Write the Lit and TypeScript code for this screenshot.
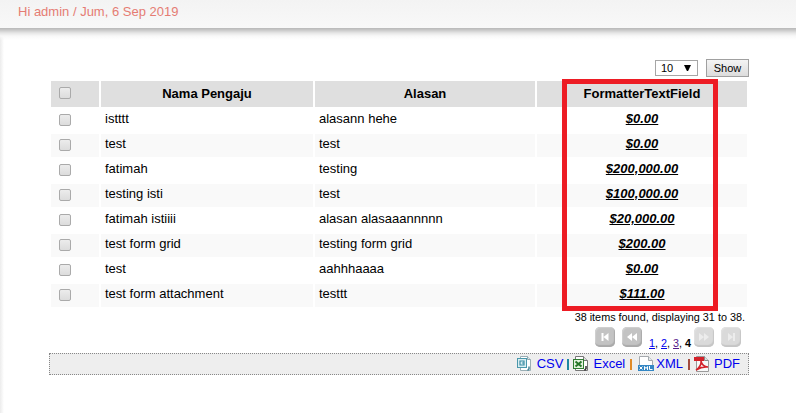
import { LitElement, html, css, svg } from "lit";
import { customElement, property } from "lit/decorators.js";

const rows = [
  ["istttt", "alasann hehe", "$0.00"],
  ["test", "test", "$0.00"],
  ["fatimah", "testing", "$200,000.00"],
  ["testing isti", "test", "$100,000.00"],
  ["fatimah istiiii", "alasan alasaaannnnn", "$20,000.00"],
  ["test form grid", "testing form grid", "$200.00"],
  ["test", "aahhhaaaa", "$0.00"],
  ["test form attachment", "testtt", "$111.00"],
];

const fileIcons: Record<string, unknown> = {
  csv: svg`
    <path d="M3.500 .5h7l3 3v11h-10z" fill="#fff" stroke="#9aaeb4"/>
    <path d="M10.500 .5v3h3" fill="#dce8ec" stroke="#8fa8b0"/>
    <rect x=".5" y="2.500" width="9" height="9" fill="#d9eef2" stroke="#4a97ab"/>
    <path d="M3 5h4v4H3zM5 7h2" fill="none" stroke="#3e8ea4" stroke-width="1.200"/>
    <path d="M12 10.500v2.500l-1.500 1.500" fill="none" stroke="#478599" stroke-width="1.500"/>`,
  excel: svg`
    <path d="M2.500 .5h8l4 4v10h-12z" fill="#fff" stroke="#777"/>
    <path d="M10.500 .5v4h4" fill="#ddd" stroke="#777"/>
    <rect x=".5" y="3.500" width="10" height="9" fill="#e4f3df" stroke="#2f7d31"/>
    <path d="M2.500 5.500l6 5M8.500 5.500l-6 5" stroke="#267528" stroke-width="2"/>
    <path d="M13 10v2.500l-1.500 2" fill="none" stroke="#333" stroke-width="1.500"/>`,
  xml: svg`
    <path d="M1.500 10V.5h9l4 4V10" fill="#fff" stroke="#a5a9ad"/>
    <path d="M10.500 .5v4h4" fill="#e4eaec" stroke="#a5a9ad"/>
    <rect x="0" y="9" width="16" height="6" fill="#3487c4"/>
    <path d="M1.500 10.500l3 3m0-3l-3 3M6.500 14v-3.500l1.500 2 1.500-2V14M11.500 10v3.500h3" fill="none" stroke="#fff"/>`,
  pdf: svg`
    <path d="M2.500 .5h8l4 4v11h-12z" fill="#f8f8f8" stroke="#9a9a9a"/>
    <path d="M10.500 .5v4h4" fill="#ddd" stroke="#8a8a8a"/>
    <path d="M0 1h10v4H0z" fill="#d3222a"/>
    <path d="M2 14c3-2 5.500-5 5-9 1 4 3 6 7 6-4-.5-8 .5-12 3z" fill="none" stroke="#d3222a" stroke-width="1.500"/>`,
};

const glyphs: Record<string, string> = {
  first: "M6.500 6h2v8h-2zM13.500 6v8l-5-4z",
  prev: "M10 6v8l-5-4zM15 6v8l-5-4z",
  next: "M5 6v8l5-4zM10 6v8l5-4z",
  last: "M7 6v8l5-4zM12 6h2v8h-2z",
};

@customElement("page-button")
class PageButton extends LitElement {
  @property() kind = "first";
  @property({ type: Boolean, reflect: true }) disabled = false;
  static styles = css`
    :host { display: block; width: 20px; height: 20px; box-sizing: border-box; border-radius: 5px;
      background: #c3c3c3; box-shadow: inset -1px -2px 1px #aaa, inset 1px 1px 1px #d1d1d1; }
    :host([disabled]) { background: #dadada; box-shadow: inset -1px -2px 1px #c6c6c6, inset 1px 1px 1px #e2e2e2; }
    svg { display: block; }
    path { fill: #fff; }
    :host([disabled]) path { fill: #ececec; }
  `;
  render() {
    return html`<svg width="20" height="20" viewBox="0 0 20 20"><path d=${glyphs[this.kind]}></path></svg>`;
  }
}

@customElement("app-root")
class AppRoot extends LitElement {
  static styles = css`
    :host { display: block; height: 413px; position: relative; overflow: hidden; background: #fff;
      color: #000; font: 12px/16px "Liberation Sans", Arial, sans-serif; }
    .top { height: 28px; box-sizing: border-box; padding: 4px 18px; background: linear-gradient(#f3f3f3, #f8f8f8);
      color: #e57c73; font-size: 13px; }
    .content { height: 385px; box-sizing: border-box; padding: 31px 47px 0 49px;
      background:
        linear-gradient(#b8b8b8, #c8c8c8 2px, #e6e6e6 5px, #f8f8f8 8px, rgba(255, 255, 255, 0) 12px) top / 100% 12px no-repeat,
        linear-gradient(90deg, #ececec, #fff 4px); }
    .controls { display: flex; justify-content: flex-end; align-items: center; gap: 8px; height: 18px; font-size: 11px; }
    .select { display: flex; justify-content: space-between; align-items: center; width: 43px; height: 16px;
      box-sizing: border-box; border: 1px solid #a6a6a6; padding: 0 6px 0 5px; }
    .arrow { width: 7px; height: 6px; background: #000; clip-path: polygon(0 0, 100% 0, 58% 100%, 42% 100%); }
    .show { width: 43px; height: 18px; box-sizing: border-box; border: 1px solid #a0a0a0; padding: 0;
      background: linear-gradient(#f4f4f4, #dcdcdc); font: inherit; line-height: 16px; color: #000; }
    .grid { display: grid; grid-template-columns: 48px 212px 220px 210px; grid-template-rows: 26px repeat(8, 23px);
      gap: 2px; margin: 4px 0 0 2px; width: 696px; }
    .cell { padding: 1px 4px 0; line-height: 17px; font-size: 13px; white-space: nowrap; }
    .odd { background: #f9f9f9; }
    .head { background: #dfdfdf; font-weight: 700; text-align: center; line-height: 23px; }
    .pick { padding: 5px 0 0 8px; }
    .head.pick { padding-top: 6px; }
    .check { display: block; width: 12px; height: 12px; box-sizing: border-box; border: 1px solid #aaa;
      border-radius: 2px; background: linear-gradient(#ececec, #dcdcdc); }
    .money { text-align: center; font-weight: 700; font-style: italic; text-decoration: underline; }
    .mark { position: absolute; left: 562px; top: 79px; width: 156px; height: 232px; box-sizing: border-box;
      border: 5px solid #ed1c24; }
    .summary { margin-top: 3px; width: 696px; text-align: right; font-size: 10.830px; line-height: 14px; }
    .pager { display: flex; justify-content: flex-end; margin: 3px 8px 0 0; height: 20px; font-size: 10.800px; }
    .pager page-button + page-button { margin-left: 7px; }
    .pages { width: 52px; box-sizing: border-box; padding: 8px 0 0 7px; line-height: 16px; white-space: nowrap; }
    a { color: #00e; }
    .seen { color: #551a8b; }
    .export { display: flex; align-items: center; justify-content: flex-end; width: 700px; height: 22px;
      box-sizing: border-box; margin-top: 6px; padding-right: 8px; border: 1px dotted #888; background: #eee; font-size: 13px; }
    .export a { display: flex; align-items: center; gap: 4px; text-decoration: none; height: 20px; }
    .export a.xml { gap: 2px; }
    .export svg { display: block; }
    .label { display: block; line-height: 20px; }
    .bar { width: 2px; height: 11px; margin: 0 4px 0 4px; }
    .teal { background: #1c87a0; }
    .orange { background: #e08a28; margin: 0 6px 0 5px; }
    .brown { background: #a34b3d; margin-left: 5px; }
  `;

  link(kind: string, label: string) {
    return html`<a class=${kind}><svg width="16" height="16" viewBox="0 0 16 16">${fileIcons[kind]}</svg><span class="label">${label}</span></a>`;
  }

  render() {
    return html`
      <div class="top">Hi admin / Jum, 6 Sep 2019</div>
      <div class="content">
        <div class="controls">
          <div class="select"><span>10</span><span class="arrow"></span></div>
          <button class="show">Show</button>
        </div>
        <div class="grid">
          <div class="cell head pick"><span class="check"></span></div>
          <div class="cell head">Nama Pengaju</div>
          <div class="cell head">Alasan</div>
          <div class="cell head">FormatterTextField</div>
          ${rows.map((r, i) => {
            const odd = i % 2 ? "odd" : "";
            return html`
              <div class="cell pick ${odd}"><span class="check"></span></div>
              <div class="cell ${odd}">${r[0]}</div>
              <div class="cell ${odd}">${r[1]}</div>
              <div class="cell money ${odd}">${r[2]}</div>`;
          })}
        </div>
        <div class="summary">38 items found, displaying 31 to 38.</div>
        <div class="pager">
          <page-button kind="first"></page-button>
          <page-button kind="prev"></page-button>
          <div class="pages"><a href="#">1</a>, <a href="#">2</a>, <a href="#" class="seen">3</a>, <b>4</b></div>
          <page-button kind="next" disabled></page-button>
          <page-button kind="last" disabled></page-button>
        </div>
        <div class="export">
          ${this.link("csv", "CSV")}<span class="bar teal"></span>
          ${this.link("excel", "Excel")}<span class="bar orange"></span>
          ${this.link("xml", "XML")}<span class="bar brown"></span>
          ${this.link("pdf", "PDF")}
        </div>
      </div>
      <div class="mark"></div>
    `;
  }
}
